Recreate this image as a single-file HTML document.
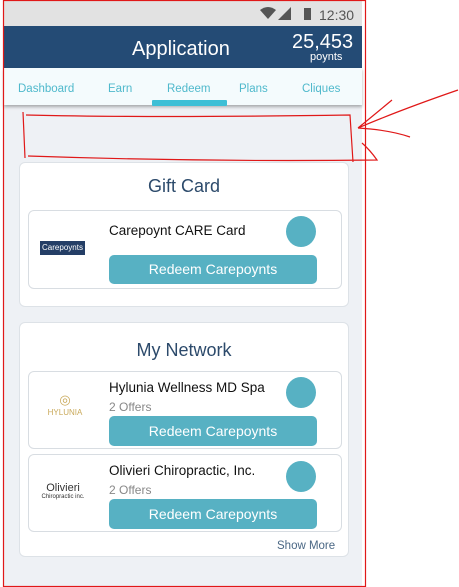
<!DOCTYPE html>
<html><head><style>
*{margin:0;padding:0;box-sizing:border-box}
body{width:459px;height:587px;background:#fff;position:relative;overflow:hidden;font-family:"Liberation Sans",sans-serif}
.a{position:absolute}
.card{position:absolute;background:#fff;border:1px solid #dde2e7;border-radius:6px}
.item{position:absolute;background:#fff;border:1px solid #d8dde2;border-radius:6px}
.btn{position:absolute;background:#57b1c3;border-radius:5px;color:#fff;font-size:14px;text-align:center}
.circ{position:absolute;width:30px;height:31px;border-radius:50%;background:#57b1c3}
.nm{position:absolute;font-size:13.5px;color:#111}
.of{position:absolute;font-size:12px;color:#888}
.tab{position:absolute;top:83px;font-size:11.5px;color:#4fb9cc}
</style></head><body>
<div class="a" style="left:4px;top:0;width:358px;height:587px;background:#eef1f5"></div>
<div class="a" style="left:4px;top:0;width:358px;height:26px;background:#e2e2e2"></div>
<svg class="a" style="left:258px;top:6px" width="100" height="16">
<path d="M2 4 Q10 -2 18 4 L10 13 Z" fill="#555"/>
<path d="M20 14 L33 14 L33 1 Z" fill="#555"/>
<rect x="46" y="2" width="7" height="12" fill="#555"/>
<text x="61" y="14" font-size="14" fill="#555" font-family="Liberation Sans">12:30</text>
</svg>
<div class="a" style="left:4px;top:26px;width:358px;height:42px;background:#244b75"></div>
<div class="a" style="left:132px;top:38px;font-size:20px;color:#fff">Application</div>
<div class="a" style="left:292px;top:31px;font-size:20px;color:#fff">25,453</div>
<div class="a" style="left:310px;top:51px;font-size:11px;color:#fff">poynts</div>
<div class="a" style="left:4px;top:68px;width:358px;height:37px;background:#f4fbfd;box-shadow:0 2px 3px rgba(0,0,0,.3)"></div>
<div class="tab" style="left:18px">Dashboard</div>
<div class="tab" style="left:108px">Earn</div>
<div class="tab" style="left:167px">Redeem</div>
<div class="tab" style="left:239px">Plans</div>
<div class="tab" style="left:302px">Cliques</div>
<div class="a" style="left:152px;top:100px;width:75px;height:6px;background:#3dbfd6;border-radius:1px"></div>

<div class="card" style="left:19px;top:162px;width:330px;height:145px"></div>
<div class="a" style="left:19px;top:176px;width:330px;text-align:center;font-size:18px;color:#2c4a6b">Gift Card</div>
<div class="item" style="left:28px;top:210px;width:314px;height:79px"></div>
<div class="a" style="left:40px;top:241px;width:45px;height:14px;background:#243e66;color:#fff;font-size:8px;line-height:14px;text-align:center">Carepoynts</div>
<div class="nm" style="left:109px;top:223px">Carepoynt CARE Card</div>
<div class="circ" style="left:286px;top:216px"></div>
<div class="btn" style="left:109px;top:255px;width:208px;height:29px;line-height:29px">Redeem Carepoynts</div>

<div class="card" style="left:19px;top:322px;width:330px;height:235px"></div>
<div class="a" style="left:19px;top:340px;width:330px;text-align:center;font-size:18px;color:#2c4a6b">My Network</div>
<div class="item" style="left:28px;top:371px;width:314px;height:78px"></div>
<div class="a" style="left:45px;top:392px;width:40px;text-align:center;color:#c9a95a;font-size:8px"><div style="font-size:13px">◎</div>HYLUNIA</div>
<div class="nm" style="left:109px;top:380px">Hylunia Wellness MD Spa</div>
<div class="of" style="left:109px;top:400px">2 Offers</div>
<div class="circ" style="left:286px;top:377px"></div>
<div class="btn" style="left:109px;top:416px;width:208px;height:30px;line-height:30px">Redeem Carepoynts</div>

<div class="item" style="left:28px;top:454px;width:314px;height:78px"></div>
<div class="a" style="left:40px;top:483px;width:46px;text-align:center;color:#333;line-height:1"><div style="font-size:11px">Olivieri</div><div style="font-size:6px">Chiropractic inc.</div></div>
<div class="nm" style="left:109px;top:463px">Olivieri Chiropractic, Inc.</div>
<div class="of" style="left:109px;top:483px">2 Offers</div>
<div class="circ" style="left:286px;top:461px"></div>
<div class="btn" style="left:109px;top:499px;width:208px;height:30px;line-height:30px">Redeem Carepoynts</div>
<div class="a" style="left:277px;top:540px;font-size:11.5px;color:#4a6784">Show More</div>

<svg class="a" style="left:0;top:0" width="459" height="587" fill="none" stroke="#e01818" stroke-width="1.2">
<rect x="3.5" y="0.5" width="362" height="586"/>
<path d="M23 112 L25 158 M26 115 Q150 118 350 115 L353 162 M28 156 Q200 162 377 160 Q370 150 362 143"/>
<path d="M358 128 Q400 110 458 90 M358 128 Q380 110 392 100 M358 128 Q390 130 410 137"/>
</svg>
</body></html>
